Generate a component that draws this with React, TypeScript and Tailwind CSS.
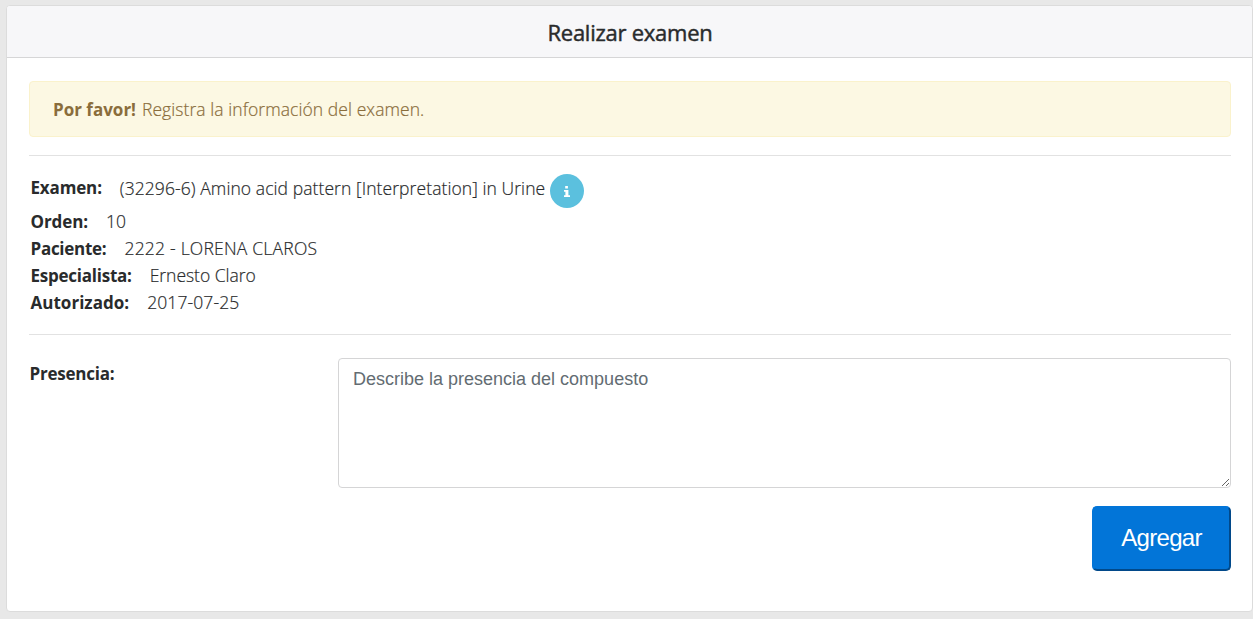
import React from "react";

type DetailProps = {
  label: string;
  labelClass: string;
  valueClass: string;
  children: React.ReactNode;
};

function Detail({ label, labelClass, valueClass, children }: DetailProps) {
  return (
    <div className="flex h-[27px] items-center whitespace-nowrap">
      <strong className={`font-bold ${labelClass}`}>{label}</strong>
      <span className={`ml-[18px] text-[17.5px] font-light [-webkit-text-stroke:0.2px_currentColor] ${valueClass}`}>
        {children}
      </span>
    </div>
  );
}

export default function App() {
  return (
    <div className="h-[619px] w-full overflow-hidden bg-[#e8e8e8] pt-[5px] pl-[6px] font-['Open_Sans',sans-serif] text-[17px] text-[#292b2c]">
      <main className="h-[607px] w-full rounded-[4px] border border-[#dcdcdc] bg-white">
        <header className="flex h-[52px] items-center justify-center rounded-t-[3px] border-b border-[#d6d6d7] bg-[#f7f7f9]">
          <h1 className="pt-[2px] pl-px text-[22px] font-normal tracking-[-0.25px] [-webkit-text-stroke:0.45px_currentColor]">
            Realizar examen
          </h1>
        </header>
        <div className="pt-[23px] pr-[21px] pl-[22px]">
          <div className="flex h-[56px] items-center gap-[6px] rounded-[4px] border border-[#faf2cc] bg-[#fcf8e3] pt-px pl-[23px] whitespace-nowrap text-[#8a6d3b]">
            <strong className="font-bold">Por favor!</strong>
            <span className="text-[17.5px] font-light tracking-[0.07px] [-webkit-text-stroke:0.2px_currentColor]">
              Registra la información del examen.
            </span>
          </div>
          <hr className="mt-[18px] border-[#e2e2e2]" />
          <section className="pt-[18px] pl-[1.5px]">
            <div className="flex h-[34px] whitespace-nowrap">
              <strong className="leading-[27px] font-bold tracking-[-0.15px]">Examen:</strong>
              <span className="ml-[18px] w-[426px] text-[17.5px] leading-[29px] font-light tracking-[0.08px] [-webkit-text-stroke:0.2px_currentColor]">
                (32296-6) Amino acid pattern [Interpretation] in Urine
              </span>
              <button
                aria-label="Información"
                className="ml-[4.5px] flex size-[34px] shrink-0 items-center justify-center rounded-full bg-[#5bc0de] text-white"
              >
                <svg viewBox="0 0 6 12" className="mt-px h-[12px] w-[6px]" fill="currentColor">
                  <path d="M1.2 0h2.7v2.500H1.200zM0 4h4.400v5.200H6V11H0V9.200h1.400V5.800H0z" />
                </svg>
              </button>
            </div>
            <Detail label="Orden:" labelClass="tracking-[-0.1px]" valueClass="">10</Detail>
            <Detail label="Paciente:" labelClass="tracking-[-0.27px]" valueClass="tracking-[0.22px]">
              2222 - LORENA CLAROS
            </Detail>
            <Detail label="Especialista:" labelClass="tracking-[-0.24px]" valueClass="tracking-[-0.03px]">
              Ernesto Claro
            </Detail>
            <Detail label="Autorizado:" labelClass="tracking-[0.02px]" valueClass="tracking-[0.1px]">
              2017-07-25
            </Detail>
          </section>
          <hr className="mt-[18px] border-[#e2e2e2]" />
          <form className="pt-[23px]">
            <div className="flex">
              <label htmlFor="presencia" className="w-[309px] pl-[0.6px] leading-[32px] font-bold tracking-[-0.25px]">
                Presencia:
              </label>
              <textarea
                id="presencia"
                placeholder="Describe la presencia del compuesto"
                className="block h-[130px] flex-1 resize rounded-[4px] border border-[#d5d5d6] bg-white px-[14px] py-[7px] font-['Liberation_Sans',sans-serif] text-[18px] leading-[27px] placeholder:text-[#636c72]"
              />
            </div>
            <div className="mt-[18px] flex justify-end">
              <button
                type="button"
                className="h-[65px] w-[139px] rounded-[5px] border-2 border-t-[#0275d8] border-r-[#01498a] border-b-[#01498a] border-l-[#0275d8] bg-[#0275d8] pb-[2px] font-['Liberation_Sans',sans-serif] text-[24px] tracking-[-0.7px] text-white"
              >
                Agregar
              </button>
            </div>
          </form>
        </div>
      </main>
    </div>
  );
}
